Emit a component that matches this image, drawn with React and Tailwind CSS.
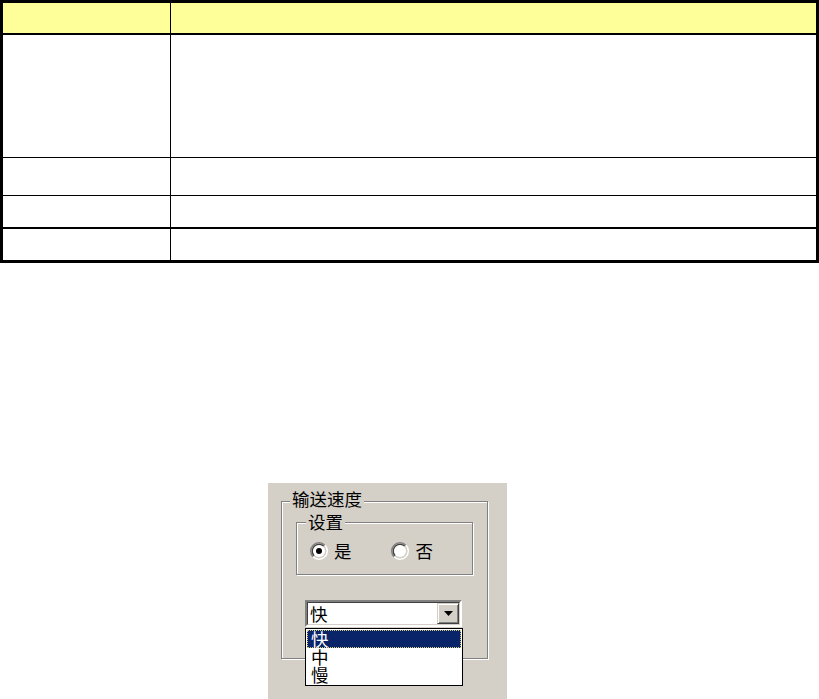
import React from "react";

function Radio({ checked }) {
  return (
    <svg width="18" height="18" viewBox="0 0 12 12" className="shrink-0">
      <path d="M2.11 9.89 A5.5 5.5 0 0 1 9.89 2.11" fill="none" stroke="#808080" strokeWidth="1" />
      <path d="M9.89 2.11 A5.5 5.5 0 0 1 2.11 9.89" fill="none" stroke="#ffffff" strokeWidth="1" />
      <path d="M2.82 9.18 A4.5 4.5 0 0 1 9.18 2.82" fill="none" stroke="#404040" strokeWidth="1" />
      <path d="M9.18 2.82 A4.5 4.5 0 0 1 2.82 9.18" fill="none" stroke="#d4d0c8" strokeWidth="1" />
      <circle cx="6" cy="6" r="4" fill="#ffffff" />
      {checked && <circle cx="6" cy="6" r="2" fill="#000000" />}
    </svg>
  );
}

function Row({ h, border, yellow }) {
  return (
    <div className={`flex ${h} ${border} border-black ${yellow ? "bg-[#ffff99]" : "bg-white"}`}>
      <div className="w-[168px] shrink-0 border-r border-black" />
      <div className="flex-1" />
    </div>
  );
}

export default function App() {
  return (
    <div className="w-[819px] h-[699px] bg-white overflow-hidden font-['Noto_Sans_CJK_SC',sans-serif] text-black">
      {/* Table */}
      <div className="w-[819px] border-[3px] border-black flex flex-col">
        <Row h="h-[32px]" border="border-b-2" yellow />
        <Row h="h-[123px]" border="border-b" />
        <Row h="h-[38px]" border="border-b" />
        <Row h="h-[33px]" border="border-b-2" />
        <Row h="h-[31px]" border="" />
      </div>

      {/* Dialog fragment */}
      <div className="ml-[268px] mt-[220px] w-[239px] h-[216px] bg-[#d4d0c8] pl-[13px] pt-[18px]">
        <div className="relative w-[207px] h-[158px] border border-[#808080] shadow-[1px_1px_0_#fff,inset_1px_1px_0_#fff] pl-[14px] pt-[20px] flex flex-col items-start">
          <span className="absolute left-[8px] top-[-12px] px-[2px] bg-[#d4d0c8] text-[17.5px] leading-none">输送速度</span>

          <div className="relative w-[177px] h-[53px] border border-[#808080] shadow-[1px_1px_0_#fff,inset_1px_1px_0_#fff] pl-[13px] pt-[19px]">
            <span className="absolute left-[9px] top-[-10px] px-[2px] bg-[#d4d0c8] text-[17.5px] leading-none">设置</span>
            <div className="flex items-center h-[18px]">
              <Radio checked />
              <span className="ml-[6px] text-[17.5px] leading-none">是</span>
              <div className="ml-[39px]">
                <Radio />
              </div>
              <span className="ml-[7px] text-[17.5px] leading-none">否</span>
            </div>
          </div>

          <div className="relative mt-[25px] ml-[9px] w-[157px] h-[27px] border-2 border-t-[#808080] border-l-[#808080] border-b-white border-r-white">
            <div className="h-full flex border border-t-[#404040] border-l-[#404040] border-b-[#d4d0c8] border-r-[#d4d0c8] bg-white">
              <div className="flex-1 pl-[2px] text-[17.5px] leading-[21px]">快</div>
              <div className="w-[22px] h-full flex items-center justify-center bg-[#d4d0c8] border border-t-[#d4d0c8] border-l-[#d4d0c8] border-b-[#404040] border-r-[#404040] shadow-[inset_1px_1px_0_#fff,inset_-1px_-1px_0_#808080]">
                <svg width="9" height="5" viewBox="0 0 9 5">
                  <polygon points="0,0 9,0 4.5,5" fill="#000" />
                </svg>
              </div>
            </div>
            <div className="absolute left-[-2px] top-[26px] w-[158px] bg-white border border-black p-[1px] text-[17.5px]">
              <div className="h-[18px] leading-[16px] pl-[3px] bg-[#0a246a] text-white border border-dotted border-[#d8d080]">快</div>
              <div className="h-[18px] leading-[18px] pl-[4px]">中</div>
              <div className="h-[18px] leading-[18px] pl-[4px]">慢</div>
            </div>
          </div>
        </div>
      </div>
    </div>
  );
}
